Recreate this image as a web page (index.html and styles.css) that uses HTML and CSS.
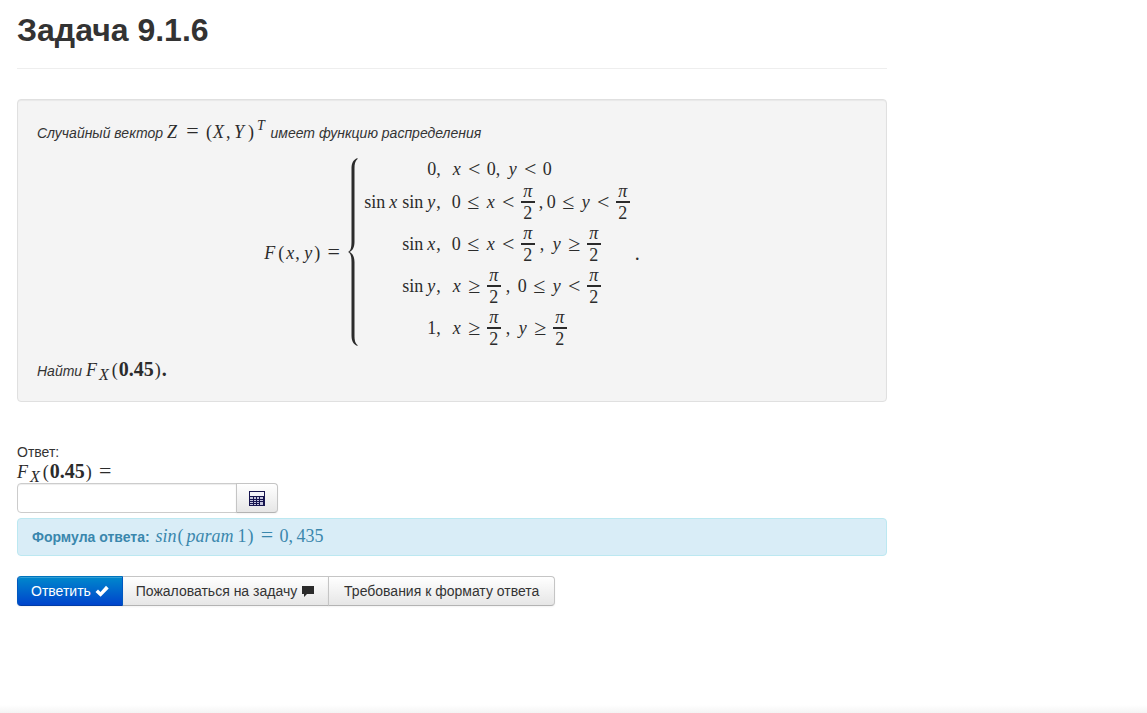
FILE: index.html
```html
<!DOCTYPE html>
<html lang="ru">
<head>
<meta charset="utf-8">
<meta name="viewport" content="width=device-width, initial-scale=1">
<title>Задача 9.1.6</title>
<link rel="stylesheet" href="styles.css">
</head>
<body>
<main class="page">
  <header class="page-header"><h1>Задача 9.1.6</h1></header>

  <section class="well">
    <p class="statement">Случайный вектор <span class="math"><i class="cap">Z</i><span class="rel">=</span><span class="par">(</span><i class="cap">X</i><span class="comma">,</span><i class="cap">Y</i><span class="par">)</span><sup>T</sup></span> имеет функцию распределения</p>

    <div class="equation math">
      <div class="lhs"><i class="cap">F</i><span class="par">(</span><i class="v">x</i><span class="comma">,</span><i class="v">y</i><span class="par">)</span><span class="rel">=</span></div>
      <svg class="brace" viewBox="0 0 10 188" preserveAspectRatio="none" aria-hidden="true"><path d="M9.500 0C5 2 3.500 5 3.500 11V84C3.500 90 2.500 93 0 94C2.500 95 3.500 98 3.500 104V177C3.500 183 5 186 9.500 188V187C7 185 6.500 182 6.500 177V104C6.500 98 4 95 1.500 94C4 93 6.500 90 6.500 84V11C6.500 6 7 3 9.500 1Z"/></svg>
      <div class="cases">
        <div class="value">0,</div>
        <div class="cond"><i class="v">x</i><span class="rel">&lt;</span>0<span class="sep">,</span><i class="v">y</i><span class="rel">&lt;</span>0</div>

        <div class="value"><span class="fn">sin</span><i class="v">x</i><span class="fn next">sin</span><i class="v">y</i>,</div>
        <div class="cond">0<span class="rel">≤</span><i class="v">x</i><span class="rel">&lt;</span><span class="frac"><i>π</i><span>2</span></span><span class="sep tight">,</span>0<span class="rel">≤</span><i class="v">y</i><span class="rel">&lt;</span><span class="frac"><i>π</i><span>2</span></span></div>

        <div class="value"><span class="fn">sin</span><i class="v">x</i>,</div>
        <div class="cond">0<span class="rel">≤</span><i class="v">x</i><span class="rel">&lt;</span><span class="frac"><i>π</i><span>2</span></span><span class="sep wide">,</span><i class="v">y</i><span class="rel">≥</span><span class="frac"><i>π</i><span>2</span></span></div>

        <div class="value"><span class="fn">sin</span><i class="v">y</i>,</div>
        <div class="cond"><i class="v">x</i><span class="rel">≥</span><span class="frac"><i>π</i><span>2</span></span><span class="sep wide">,</span>0<span class="rel">≤</span><i class="v">y</i><span class="rel">&lt;</span><span class="frac"><i>π</i><span>2</span></span></div>

        <div class="value">1,</div>
        <div class="cond"><i class="v">x</i><span class="rel">≥</span><span class="frac"><i>π</i><span>2</span></span><span class="sep wide">,</span><i class="v">y</i><span class="rel">≥</span><span class="frac"><i>π</i><span>2</span></span></div>
      </div>
      <span class="stop">.</span>
    </div>

    <p class="statement">Найти <span class="math"><i class="cap">F</i><sub>X</sub><span class="par">(</span><b>0.45</b><span class="par">)</span><b>.</b></span></p>
  </section>

  <form class="answer">
    <label for="answer">Ответ:<br><span class="math"><i class="cap">F</i><sub>X</sub><span class="par">(</span><b>0.45</b><span class="par">)</span><span class="rel">=</span></span></label>
    <div class="input-append">
      <input id="answer" type="text" autocomplete="off">
      <button class="btn" type="button" aria-label="Калькулятор"><svg class="calc" viewBox="0 0 16 15" aria-hidden="true"><path fill="#17154f" d="M0 0h16v15H0z"/><path fill="#f4f4fa" d="M1 1h14v4H1z"/><path fill="#c4c4dc" d="M1 6h3v2H1zM5 6h2v2H5zM8 6h2v2H8zM11 6h3v2h-3zM1 9h3v1H1zM5 9h2v1H5zM8 9h2v1H8zM11 9h3v1h-3zM1 11h3v1H1zM5 11h2v1H5zM8 11h2v1H8zM11 11h3v3h-3zM1 13h3v1H1zM5 13h2v1H5zM8 13h2v1H8z"/></svg></button>
    </div>
    <div class="alert"><strong>Формула ответа:</strong> <span class="math"><i>sin</i><span class="par">(</span><i class="word">param</i>1<span class="par">)</span><span class="rel">=</span>0<span class="comma">,</span>435</span></div>
    <div class="btn-group">
      <button class="btn primary" type="submit">Ответить <svg class="icon" viewBox="0 0 14 14" aria-hidden="true"><path fill="#fff" d="M.5 8 3 5.500 5.500 8 11 1.800 13.700 4.400 5.600 12.800Z"/></svg></button>
      <button class="btn" type="button">Пожаловаться на задачу <svg class="icon" viewBox="0 0 14 14" aria-hidden="true"><path fill="#2b2b2b" d="M1 2h12v8H6l-3 3v-3H1z"/></svg></button>
      <button class="btn roomy" type="button">Требования к формату ответа</button>
    </div>
  </form>
</main>
<footer class="bottom-shade"></footer>
</body>
</html>
```
FILE: styles.css
```css
* { box-sizing: border-box; }

body {
  margin: 0;
  min-height: 100vh;
  display: flex;
  flex-direction: column;
  background: #fff;
  color: #333;
  font: 14px/20px "Liberation Sans", Arial, sans-serif;
}

.page {
  flex: 1;
  width: 100%;
  max-width: 904px;
  padding: 10px 17px;
}

.page-header {
  margin-bottom: 30px;
  padding-bottom: 18px;
  border-bottom: 1px solid #eee;
}

h1 { margin: 0; font-size: 32px; line-height: 40px; }

.well {
  padding: 20px 19px 18px;
  border: 1px solid #e0e0e0;
  border-radius: 4px;
  background: #f4f4f4;
  box-shadow: inset 0 1px 1px rgba(0, 0, 0, .05);
}

.statement { margin: 0; line-height: 24px; font-style: italic; }

.math {
  color: #2b2b2b;
  font-family: "Liberation Serif", "Times New Roman", serif;
  font-size: 18px;
  font-style: normal;
}

.math i { font-style: italic; }
.math b { font-size: 20px; line-height: 18px; }
.math sup, .math sub { font-style: italic; line-height: 0; }
.math sup { margin: 0 2px; vertical-align: 8px; font-size: 14px; }
.math sub { margin-right: 2px; vertical-align: -4px; font-size: 16px; }

.cap { display: inline-block; min-width: 13px; }
.v { display: inline-block; min-width: 10px; text-align: center; }
.rel { display: inline-block; width: 25px; text-align: center; font-size: 22px; line-height: 18px; }
.par { display: inline-block; width: 8px; text-align: center; }
.comma { display: inline-block; width: 8px; }
.sep { display: inline-block; width: 12px; }
.sep.tight { padding-left: 4px; }
.sep.wide { width: 17px; padding-left: 5px; }
.fn { margin-right: 3px; }
.fn.next { margin-left: 4px; }
.word { margin: 0 4px 0 2px; }

.equation {
  display: flex;
  justify-content: center;
  align-items: center;
  margin: 12px 0 9px;
}

.lhs { white-space: nowrap; }

.brace {
  flex: none;
  align-self: stretch;
  width: 10px;
  height: auto;
  margin: 1px 6px 3px 2px;
  fill: #2b2b2b;
}

.cases {
  display: grid;
  grid-template-columns: auto auto;
  grid-template-rows: 24px repeat(4, 42px);
  column-gap: 11px;
  align-items: center;
  white-space: nowrap;
}

.value { text-align: right; }
.cond { display: flex; align-items: center; }

.frac {
  display: flex;
  flex-direction: column;
  width: 14px;
  text-align: center;
  line-height: 20px;
}

.frac i { border-bottom: 2px solid #2b2b2b; }
.stop { margin-left: 5px; font-size: 20px; }

.answer { margin-top: 41px; }
label { display: block; line-height: 19px; }

.input-append, .btn-group { display: flex; }

input {
  width: 220px;
  height: 30px;
  padding: 4px 6px;
  border: 1px solid #ccc;
  border-radius: 4px 0 0 4px;
  background: #fff;
  box-shadow: inset 0 1px 1px rgba(0, 0, 0, .075);
  color: #555;
  font: inherit;
}

.btn {
  height: 30px;
  margin-left: -1px;
  padding: 4px 13px;
  border: 1px solid #c5c5c5;
  border-bottom-color: #b3b3b3;
  background: linear-gradient(#fff, #e6e6e6);
  box-shadow: inset 0 1px 0 rgba(255, 255, 255, .2), 0 1px 2px rgba(0, 0, 0, .05);
  color: #333;
  font: inherit;
  white-space: nowrap;
  cursor: pointer;
}

.btn:last-child { border-radius: 0 4px 4px 0; }
.btn.roomy { padding: 4px 15px; }
.input-append .btn { padding: 4px 12px; }

.btn.primary {
  position: relative;
  margin-left: 0;
  border-color: #0074bd #0058c0 #003ca6;
  border-radius: 4px 0 0 4px;
  background: linear-gradient(#08c, #04c);
  color: #fff;
}

.icon { width: 14px; height: 14px; vertical-align: -2px; }
.calc { display: block; width: 16px; height: 15px; }

.alert {
  margin: 5px 0 20px;
  padding: 7px 14px;
  border: 1px solid #bce8f1;
  border-radius: 4px;
  background: #d9edf7;
  color: #3a87ad;
  line-height: 21px;
}

.alert .math { margin-left: 2px; color: inherit; }

.bottom-shade { height: 8px; background: linear-gradient(#fff, #f4f4f4); }
```
